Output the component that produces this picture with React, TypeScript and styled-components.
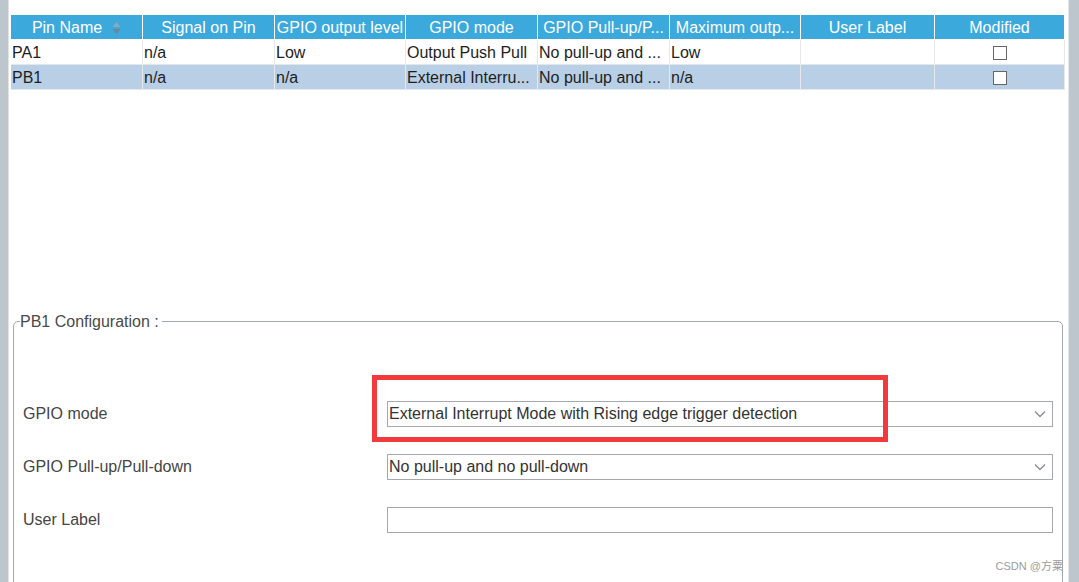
import styled, { createGlobalStyle } from 'styled-components';

const GlobalStyle = createGlobalStyle`
  html, body {
    margin: 0;
    padding: 0;
    background: #fff;
  }
  body {
    font-family: "Liberation Sans", Arial, sans-serif;
    overflow: hidden;
  }
`;

const Window = styled.div`
  position: relative;
  display: flex;
  width: 1079px;
  height: 582px;
  overflow: hidden;
  background: #fff;
`;

const LeftBar = styled.div`
  flex: 0 0 8px;
  background: #bcc6cc;
  border-right: 1px solid #dfe4e7;
`;

const RightGutter = styled.div`
  flex: 0 0 3px;
  background: #fff;
  border-right: 1px solid #e3e8eb;
`;

const RightBar = styled.div`
  flex: 0 0 10px;
  background: #bcc6cc;
`;

const Main = styled.div`
  flex: 1;
  padding: 15px 0 0 2px;
  display: flex;
  flex-direction: column;
`;

const TableArea = styled.div`
  flex: 0 0 298px;
`;

const Grid = styled.div`
  display: grid;
  grid-template-columns: 132px 132px 131px 132px 132px 131px 134px 130px;
  width: 1054px;
`;

const Cell = styled.div<{ $head?: boolean; $sel?: boolean; $center?: boolean }>`
  height: 25px;
  box-sizing: border-box;
  display: flex;
  align-items: center;
  justify-content: ${p => (p.$center || p.$head ? 'center' : 'flex-start')};
  padding: 1px 1px 0;
  font-size: 16px;
  white-space: nowrap;
  overflow: hidden;
  border-right: 1px solid ${p => (p.$head ? '#ffffff' : '#e6e9eb')};
  border-bottom: 1px solid ${p => (p.$head ? '#ffffff' : '#e3e7ea')};
  background: ${p => (p.$head ? '#3ca9dd' : p.$sel ? '#b9cfe5' : '#ffffff')};
  color: ${p => (p.$head ? '#ffffff' : '#1e1e1e')};
`;

const SortIcon = styled.svg`
  margin-left: 10px;
  flex: 0 0 auto;
`;

const Check = styled.span`
  width: 14px;
  height: 14px;
  box-sizing: border-box;
  border: 1px solid #676767;
  background: #fff;
`;

const Fieldset = styled.fieldset`
  flex: 0 0 auto;
  margin: 0 0 0 2px;
  width: 1050px;
  min-height: 320px;
  box-sizing: border-box;
  border: 1px solid #a3aaaf;
  border-radius: 5px;
  padding: 71px 9px 0 9px;
`;

const Legend = styled.legend`
  margin-left: -3px;
  padding: 0 3px 0 0;
  font-size: 16px;
  line-height: 17px;
  color: #4a4a4a;
`;

const Form = styled.div`
  display: grid;
  grid-template-columns: 364px 666px;
  row-gap: 27px;
  align-items: center;
`;

const Label = styled.div`
  font-size: 16px;
  color: #454545;
`;

const Field = styled.div`
  height: 26px;
  box-sizing: border-box;
  border: 1px solid #a5a9ad;
  background: #fff;
  display: flex;
  align-items: center;
  justify-content: space-between;
  padding: 0 6px 0 1px;
  font-size: 16px;
  color: #333;
  white-space: nowrap;
`;

const Highlight = styled.div`
  position: absolute;
  left: 372px;
  top: 375px;
  width: 516px;
  height: 67px;
  box-sizing: border-box;
  border: 5px solid #f2393b;
  pointer-events: none;
`;

const Watermark = styled.div`
  position: absolute;
  right: 16px;
  bottom: 9px;
  font-family: "Liberation Sans", "Noto Sans CJK SC", sans-serif;
  font-size: 11px;
  color: #9c9c9c;
`;

const Chevron = () => (
  <svg width="12" height="8" viewBox="0 0 12 8">
    <path d="M1 1.5 L6 6.5 L11 1.5" fill="none" stroke="#8a8a8a" strokeWidth="1.3" />
  </svg>
);

const headers = [
  'Pin Name',
  'Signal on Pin',
  'GPIO output level',
  'GPIO mode',
  'GPIO Pull-up/P...',
  'Maximum outp...',
  'User Label',
  'Modified',
];

const rows = [
  ['PA1', 'n/a', 'Low', 'Output Push Pull', 'No pull-up and ...', 'Low', ''],
  ['PB1', 'n/a', 'n/a', 'External Interru...', 'No pull-up and ...', 'n/a', ''],
];

export default function App() {
  return (
    <>
      <GlobalStyle />
      <Window>
        <LeftBar />
        <Main>
          <TableArea>
            <Grid>
              {headers.map((h, i) => (
                <Cell $head key={h}>
                  {h}
                  {i === 0 && (
                    <SortIcon width="9" height="14" viewBox="0 0 9 14">
                      <path d="M4.5 1 L8.5 6 L0.5 6 Z" fill="#8ea8bc" />
                      <path d="M0.5 8 L8.5 8 L4.5 13 Z" fill="#6786a0" />
                    </SortIcon>
                  )}
                </Cell>
              ))}
              {rows.map((r, ri) =>
                [
                  ...r.map((v, ci) => (
                    <Cell key={`${ri}-${ci}`} $sel={ri === 1}>
                      {v}
                    </Cell>
                  )),
                  <Cell key={`${ri}-chk`} $sel={ri === 1} $center>
                    <Check />
                  </Cell>,
                ]
              )}
            </Grid>
          </TableArea>

          <Fieldset>
            <Legend>PB1 Configuration :</Legend>
            <Form>
              <Label>GPIO mode</Label>
              <Field>
                External Interrupt Mode with Rising edge trigger detection
                <Chevron />
              </Field>
              <Label>GPIO Pull-up/Pull-down</Label>
              <Field>
                No pull-up and no pull-down
                <Chevron />
              </Field>
              <Label>User Label</Label>
              <Field />
            </Form>
          </Fieldset>
        </Main>
        <RightGutter />
        <RightBar />
        <Highlight />
        <Watermark>CSDN @方粟</Watermark>
      </Window>
    </>
  );
}
